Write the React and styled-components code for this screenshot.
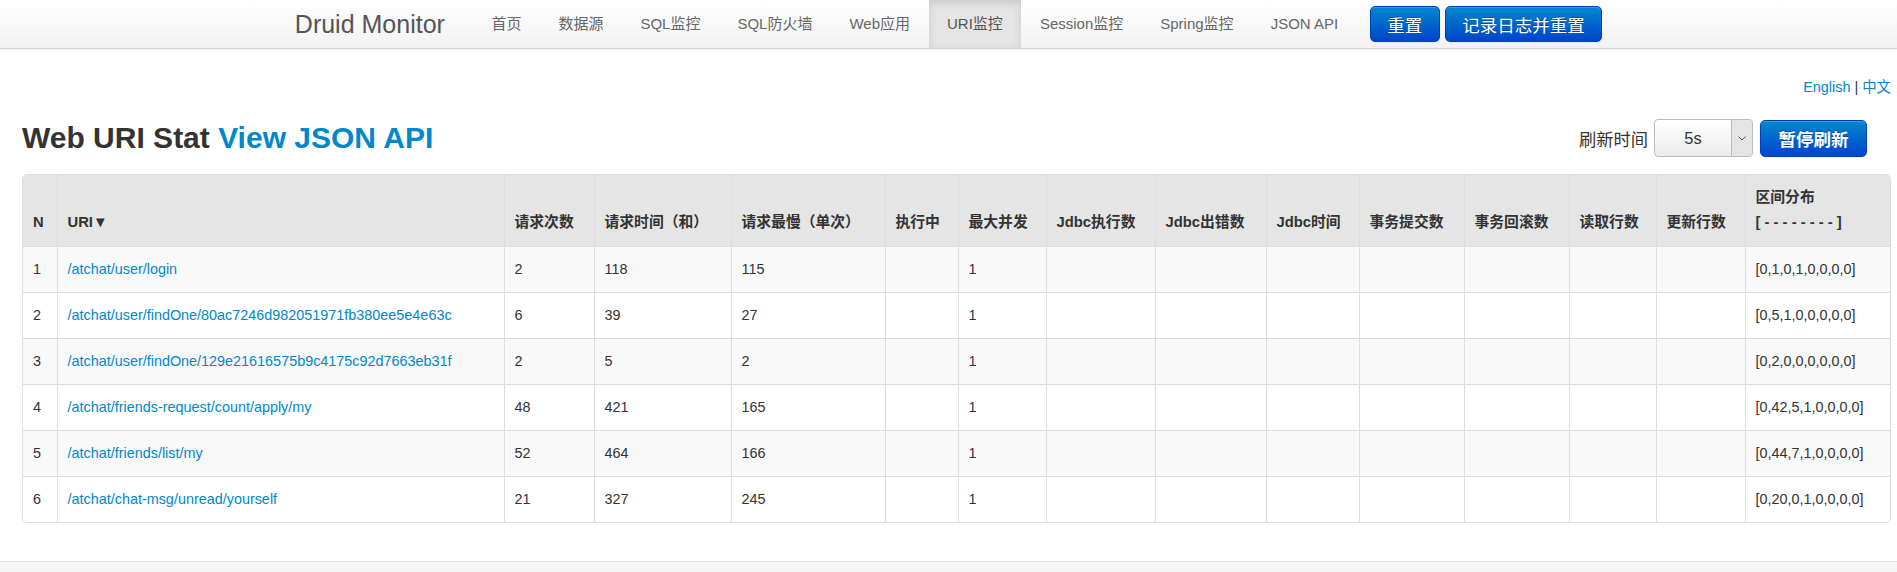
import styled, { createGlobalStyle } from "styled-components"

const GlobalStyle = createGlobalStyle`
    body {
        margin: 0;
        background: #fff;
        color: #333;
        font-family: "Liberation Sans", "Noto Sans CJK SC", sans-serif;
    }
`

const Navbar = styled.div`
    height: 48px;
    background: linear-gradient(to bottom, #ffffff, #f2f2f2);
    border-bottom: 1px solid #d4d4d4;
    box-shadow: 0 1px 4px rgba(0, 0, 0, .065);
    display: flex;
    justify-content: center;
    align-items: center;
`

const Brand = styled.div`
    font-size: 25px;
    line-height: 48px;
    color: #555;
    padding-right: 28px;
`

const NavList = styled.ul`
    display: flex;
    list-style: none;
    margin: 0;
    padding: 0;
`

const NavItem = styled.li`
    font-size: 15px;
    line-height: 48px;
    padding: 0 18.5px;
    color: ${props => props.$active ? "#555" : "#666"};
    background: ${props => props.$active ? "#e5e5e5" : "transparent"};
    box-shadow: ${props => props.$active ? "inset 0 3px 8px rgba(0, 0, 0, .125)" : "none"};
`

const NavButtons = styled.div`
    display: flex;
    gap: 5px;
    margin-left: 13px;
`

const BlueButton = styled.button`
    height: ${props => props.$h || 36}px;
    padding: 0 ${props => props.$px || 16.5}px;
    border: 1px solid #0040b8;
    border-radius: 5px;
    background: linear-gradient(to bottom, #0088cc, #0044cc);
    color: #fff;
    font-family: "Liberation Sans", "Noto Sans CJK SC", sans-serif;
    font-size: 17.5px;
    font-weight: ${props => props.$bold ? 700 : 400};
    text-shadow: 0 -1px 0 rgba(0, 0, 0, .25);
    box-shadow: inset 0 1px 0 rgba(255, 255, 255, .2), 0 1px 2px rgba(0, 0, 0, .05);
    cursor: pointer;
`

const Main = styled.div`
    padding: 0 6px 0 22px;
`

const LangBar = styled.div`
    margin-top: 28px;
    text-align: right;
    font-size: 14.4px;
    line-height: 20px;
    color: #333;
`

const Link = styled.a`
    color: #0088cc;
    text-decoration: none;
`

const HeadRow = styled.div`
    margin-top: 22px;
    height: 38px;
    display: flex;
    justify-content: space-between;
    align-items: center;
`

const Title = styled.h3`
    margin: 0;
    font-size: 30px;
    font-weight: 700;
    line-height: 38px;
    color: #333;
`

const Controls = styled.div`
    display: flex;
    align-items: center;
    margin-right: 24px;
`

const Label = styled.span`
    font-size: 17.25px;
    color: #333;
    margin-right: 6px;
`

const SelectBox = styled.div`
    box-sizing: border-box;
    width: 99px;
    height: 38px;
    display: flex;
    border: 1px solid #bbb;
    border-radius: 4px;
    background: linear-gradient(to bottom, #ffffff, #ececec);
    margin-right: 7px;
    overflow: hidden;
`

const SelectValue = styled.div`
    flex: 1;
    display: flex;
    align-items: center;
    justify-content: center;
    font-size: 16.4px;
    color: #333;
`

const SelectArrow = styled.div`
    width: 20px;
    border-left: 1px solid #bbb;
    background: #e4e4e4;
    display: flex;
    align-items: center;
    justify-content: center;
`

const TableWrap = styled.div`
    margin-top: 17px;
    width: 1869px;
    box-sizing: border-box;
    border: 1px solid #ddd;
    border-radius: 5px;
    overflow: hidden;
`

const Table = styled.table`
    width: 1867px;
    table-layout: fixed;
    border-collapse: collapse;
`

const Col = styled.col`
    width: ${props => props.$w}px;
`

const Th = styled.th`
    background: #e5e5e5;
    text-align: left;
    vertical-align: bottom;
    font-size: 14.8px;
    font-weight: 700;
    line-height: 25px;
    padding: 10px 10px 11px;
    color: #333;
    border-left: 1px solid #ddd;
    white-space: nowrap;

    &:first-child {
        border-left: 0;
    }
`

const Row = styled.tr`
    background: ${props => props.$odd ? "#f9f9f9" : "#fff"};
`

const Td = styled.td`
    font-size: 14.4px;
    line-height: 24px;
    padding: 10px 10px 11px;
    color: #333;
    border-left: 1px solid #ddd;
    border-top: 1px solid #ddd;
    white-space: nowrap;
    overflow: hidden;

    &:first-child {
        border-left: 0;
    }
`

const Footer = styled.div`
    margin-top: 38px;
    height: 40px;
    border-top: 1px solid #e5e5e5;
    background: #f5f5f5;
`

const navItems = ["首页", "数据源", "SQL监控", "SQL防火墙", "Web应用", "URI监控", "Session监控", "Spring监控", "JSON API"]

const columns = [
    { label: "N", w: 34 },
    { label: "URI▼", w: 447 },
    { label: "请求次数", w: 90 },
    { label: "请求时间（和）", w: 137 },
    { label: "请求最慢（单次）", w: 154 },
    { label: "执行中", w: 73 },
    { label: "最大并发", w: 88 },
    { label: "Jdbc执行数", w: 109 },
    { label: "Jdbc出错数", w: 111 },
    { label: "Jdbc时间", w: 93 },
    { label: "事务提交数", w: 105 },
    { label: "事务回滚数", w: 105 },
    { label: "读取行数", w: 87 },
    { label: "更新行数", w: 89 },
    { label: <>区间分布<br />[ - - - - - - - - ]</>, w: 145 },
]

const rows = [
    ["/atchat/user/login", "2", "118", "115", "[0,1,0,1,0,0,0,0]"],
    ["/atchat/user/findOne/80ac7246d982051971fb380ee5e4e63c", "6", "39", "27", "[0,5,1,0,0,0,0,0]"],
    ["/atchat/user/findOne/129e21616575b9c4175c92d7663eb31f", "2", "5", "2", "[0,2,0,0,0,0,0,0]"],
    ["/atchat/friends-request/count/apply/my", "48", "421", "165", "[0,42,5,1,0,0,0,0]"],
    ["/atchat/friends/list/my", "52", "464", "166", "[0,44,7,1,0,0,0,0]"],
    ["/atchat/chat-msg/unread/yourself", "21", "327", "245", "[0,20,0,1,0,0,0,0]"],
]

const Chevron = () => (
    <svg width="8" height="5" viewBox="0 0 8 5">
        <polyline points="0.5,0.5 4,4 7.5,0.5" fill="none" stroke="#555" strokeWidth="1" />
    </svg>
)

const App = () => {
    return (
        <>
            <GlobalStyle />
            <Navbar>
                <Brand>Druid Monitor</Brand>
                <NavList>
                    {navItems.map(item => (
                        <NavItem key={item} $active={item === "URI监控"}>{item}</NavItem>
                    ))}
                </NavList>
                <NavButtons>
                    <BlueButton>重置</BlueButton>
                    <BlueButton>记录日志并重置</BlueButton>
                </NavButtons>
            </Navbar>
            <Main>
                <LangBar>
                    <Link href="#">English</Link> | <Link href="#">中文</Link>
                </LangBar>
                <HeadRow>
                    <Title>Web URI Stat <Link href="#">View JSON API</Link></Title>
                    <Controls>
                        <Label>刷新时间</Label>
                        <SelectBox>
                            <SelectValue>5s</SelectValue>
                            <SelectArrow><Chevron /></SelectArrow>
                        </SelectBox>
                        <BlueButton $h={37} $px={17.5} $bold>暂停刷新</BlueButton>
                    </Controls>
                </HeadRow>
                <TableWrap>
                    <Table>
                        <colgroup>
                            {columns.map((c, i) => <Col key={i} $w={c.w} />)}
                        </colgroup>
                        <thead>
                            <tr>
                                {columns.map((c, i) => <Th key={i}>{c.label}</Th>)}
                            </tr>
                        </thead>
                        <tbody>
                            {rows.map((r, i) => (
                                <Row key={i} $odd={i % 2 === 0}>
                                    <Td>{i + 1}</Td>
                                    <Td><Link href="#">{r[0]}</Link></Td>
                                    <Td>{r[1]}</Td>
                                    <Td>{r[2]}</Td>
                                    <Td>{r[3]}</Td>
                                    <Td></Td>
                                    <Td>1</Td>
                                    <Td></Td>
                                    <Td></Td>
                                    <Td></Td>
                                    <Td></Td>
                                    <Td></Td>
                                    <Td></Td>
                                    <Td></Td>
                                    <Td>{r[4]}</Td>
                                </Row>
                            ))}
                        </tbody>
                    </Table>
                </TableWrap>
            </Main>
            <Footer />
        </>
    )
}

export default App
